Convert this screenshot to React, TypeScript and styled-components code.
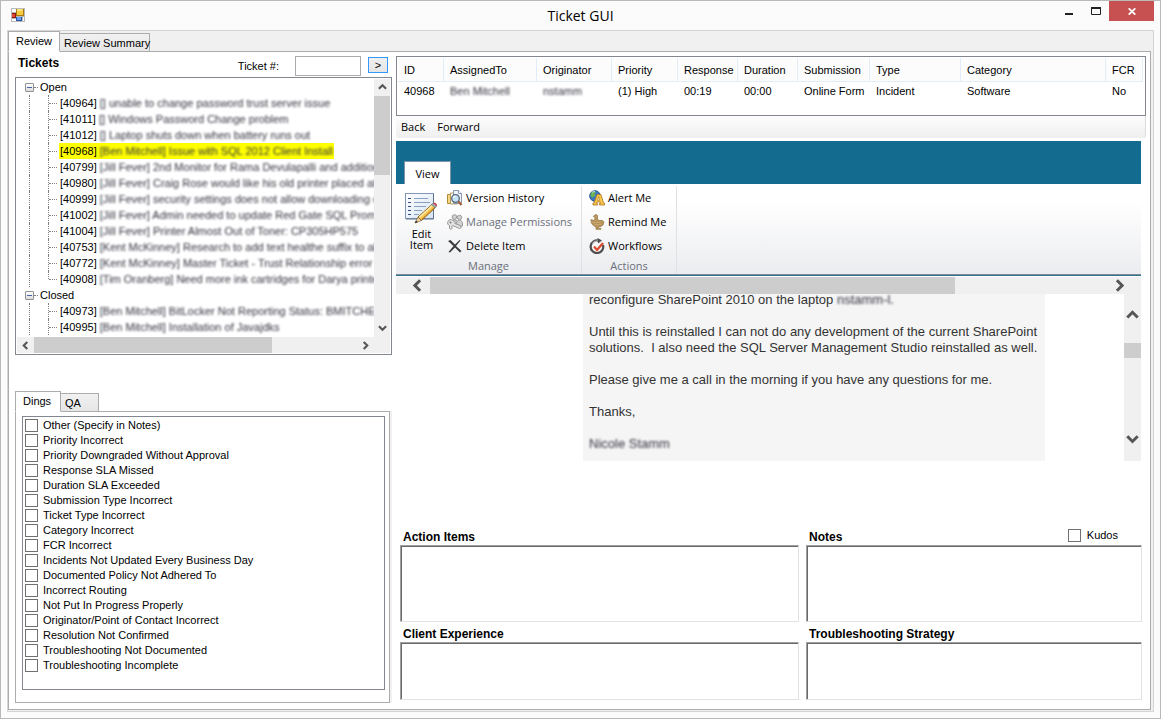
import React, { useState } from 'react';
import styled, { createGlobalStyle } from 'styled-components';

const GlobalStyle = createGlobalStyle`
  * { box-sizing: border-box; }
  body {
    margin: 0;
    background: #fbfbfb;
    color: #000;
    font: 11px/16px "Liberation Sans", Arial, sans-serif;
  }
  button, input, textarea { font: inherit; color: inherit; margin: 0; padding: 0; border-radius: 0; }
  ul { list-style: none; margin: 0; padding: 0; }
`;

/* ---------- window frame ---------- */

const Window = styled.div`
  display: flex;
  flex-direction: column;
  min-height: 100vh;
  min-width: 1000px;
  padding: 0 6px 6px 6px;
  border: 1px solid #b9b9b9;
`;

const TitleBar = styled.header`
  display: grid;
  grid-template-columns: 1fr auto 1fr;
  height: 29px;
`;

const AppIconBox = styled.div`
  padding: 7px 0 0 4px;
  line-height: 0;
`;

const Title = styled.h1`
  margin: 0;
  font: 14px/29px "Open Sans", "Noto Sans", sans-serif;
`;

const WindowButtons = styled.div`
  display: flex;
  justify-content: flex-end;
  align-items: flex-start;
`;

const WindowButton = styled.button<{ $close?: boolean }>`
  display: flex;
  align-items: center;
  justify-content: center;
  width: ${p => (p.$close ? 45 : 27)}px;
  height: 20px;
  border: 0;
  background: ${p => (p.$close ? '#c75050' : 'transparent')};
`;

const Client = styled.main`
  display: flex;
  flex-direction: column;
  flex: 1;
  padding: 0 2px 1px 0;
  border: 1px solid #d4d4d4;
  background: #f0f0f0;
`;

/* ---------- tabs ---------- */

const TabStrip = styled.div`
  display: flex;
  align-items: flex-end;
  height: 21px;
  margin-bottom: -1px;
  z-index: 1;
`;

const Tab = styled.button<{ $active?: boolean; $width: number }>`
  width: ${p => p.$width}px;
  height: ${p => (p.$active ? 21 : 19)}px;
  padding-left: ${p => (p.$active ? 7 : 4)}px;
  padding-bottom: ${p => (p.$active ? 1 : 0)}px;
  border: 1px solid #acacac;
  border-left-width: ${p => (p.$active ? 1 : 0)}px;
  border-bottom-color: ${p => (p.$active ? '#fff' : '#acacac')};
  background: ${p => (p.$active ? '#fff' : 'linear-gradient(#f1f1f1, #e6e6e6)')};
  text-align: left;
  white-space: nowrap;
`;

const Page = styled.div`
  display: flex;
  flex: 1;
  gap: 4px;
  padding: 4px 4px 6px 6px;
  border: 1px solid #acacac;
  background: #fff;
`;

const LeftColumn = styled.section`
  display: flex;
  flex-direction: column;
  width: 377px;
`;

const RightColumn = styled.section`
  display: flex;
  flex-direction: column;
  flex: 1;
  min-width: 0;
`;

/* ---------- ticket search ---------- */

const SearchRow = styled.form`
  display: flex;
  align-items: flex-start;
  height: 21px;
  padding: 0 4px 0 3px;
`;

const Heading = styled.h2`
  flex: 1;
  margin: 0;
  font-size: 12px;
  line-height: 14px;
`;

const SearchLabel = styled.label`
  margin-right: 16px;
  line-height: 20px;
`;

const SearchInput = styled.input`
  width: 66px;
  height: 20px;
  margin-right: 7px;
  border: 1px solid #ababab;
`;

const GoButton = styled.button`
  width: 20px;
  height: 16px;
  margin-top: 1px;
  border: 1px solid #3399ff;
  background: linear-gradient(#f0f0f0, #e5e5e5);
  line-height: 14px;
`;

/* ---------- tree ---------- */

const TreeFrame = styled.div`
  display: grid;
  grid-template-columns: minmax(0, 1fr) 16px;
  grid-template-rows: 258px 16px;
  padding: 1px;
  border: 1px solid #828790;
`;

const Tree = styled.ul`
  overflow: hidden;
  white-space: nowrap;
`;

const GroupRow = styled.div`
  display: flex;
  align-items: center;
  height: 16px;
  padding-left: 8px;
`;

const Expander = styled.button`
  display: flex;
  align-items: center;
  justify-content: center;
  width: 9px;
  height: 9px;
  border: 1px solid #919191;
  border-radius: 1px;
  background: linear-gradient(#fff, #dcdcdc);
  &::before { content: ''; width: 5px; height: 1px; background: #4b63a7; }
`;

const Twig = styled.span<{ $width: number }>`
  flex: 0 0 ${p => p.$width}px;
  margin-right: 2px;
  border-top: 1px dotted #808080;
`;

const LeafRow = styled.li`
  display: flex;
  align-items: center;
  height: 16px;
  padding-left: 12px;
`;

const Spine = styled.span<{ $width: number; $end?: boolean }>`
  align-self: flex-start;
  flex: 0 0 ${p => p.$width}px;
  height: ${p => (p.$end ? 8 : 16)}px;
  border-left: 1px dotted #808080;
`;

const LeafText = styled.span<{ $selected?: boolean }>`
  flex: none;
  padding: 0 1px;
  background: ${p => (p.$selected ? '#ffff00' : 'transparent')};
`;

const Redacted = styled.span`
  display: inline-block;
  color: #33333f;
  filter: blur(1px);
`;

/* ---------- scroll bars ---------- */

const ScrollBar = styled.div<{ $vertical?: boolean; $pad?: number; $wide?: boolean }>`
  display: flex;
  flex-direction: ${p => (p.$vertical ? 'column' : 'row')};
  grid-column: ${p => (p.$wide ? 'span 2' : 'auto')};
  padding: ${p => (p.$vertical ? `${p.$pad ?? 0}px 0` : `0 ${p.$pad ?? 0}px`)};
  background: #f0f0f0;
`;

const ScrollButton = styled.button`
  display: flex;
  align-items: center;
  justify-content: center;
  flex: 0 0 17px;
  border: 0;
  background: transparent;
`;

const Track = styled.div<{ $vertical?: boolean }>`
  display: flex;
  flex-direction: ${p => (p.$vertical ? 'column' : 'row')};
  flex: 1;
`;

const Spacer = styled.div<{ $grow: number }>`
  flex: ${p => p.$grow} 0 0;
`;

const Thumb = styled.div<{ $grow: number }>`
  flex: ${p => p.$grow} 0 0;
  background: #cdcdcd;
`;

/* ---------- dings ---------- */

const DingsTabs = styled(TabStrip)`
  margin-top: 36px;
`;

const DingsPanel = styled.div`
  display: flex;
  flex: 1;
  width: 375px;
  padding: 4px 4px 12px 6px;
  border: 1px solid #acacac;
  box-shadow: 2px 0 #f0f0f0;
`;

const CheckList = styled.ul`
  flex: 1;
  padding: 1px 2px;
  border: 1px solid #828790;
`;

const CheckLabel = styled.label<{ $gap?: number }>`
  display: flex;
  align-items: center;
  gap: ${p => p.$gap ?? 5}px;
  height: 15px;
  line-height: 13px;
`;

const CheckBox = styled.input.attrs({ type: 'checkbox' })`
  appearance: none;
  width: 13px;
  height: 13px;
  border: 1px solid #707070;
  background: #fff;
  &:checked { background: #707070; box-shadow: inset 0 0 0 2px #fff; }
`;

/* ---------- ticket grid ---------- */

const GridFrame = styled.div`
  height: 60px;
  padding: 1px 2px 0 1px;
  border: 1px solid #828790;
`;

const Grid = styled.table`
  width: 100%;
  table-layout: fixed;
  border-collapse: separate;
  border-spacing: 0;
  text-align: left;
  white-space: nowrap;
  th, td { padding: 0 0 0 6px; font-weight: normal; }
  th {
    height: 24px;
    border-right: 1px solid #e3edf8;
    border-bottom: 1px solid #e3edf8;
    background: #fcfcfc;
  }
  td { height: 18px; }
`;

const ToolBar = styled.nav`
  display: flex;
  gap: 12px;
  height: 22px;
  margin-bottom: 3px;
  padding-left: 5px;
  border-right: 1px solid #dcdcdc;
  border-radius: 0 0 3px 3px;
  background: linear-gradient(#fdfdfd, #efefef);
`;

const ToolButton = styled.button`
  border: 0;
  background: none;
  font: 11px/22px "Open Sans", "Noto Sans", sans-serif;
`;

/* ---------- embedded browser ---------- */

const Browser = styled.div`
  margin-right: 5px;
`;

const Banner = styled.div`
  display: flex;
  align-items: flex-end;
  height: 43px;
  padding-left: 8px;
  background: #136c8f;
`;

const RibbonTab = styled.button`
  width: 47px;
  height: 23px;
  border: 1px solid #7e93a5;
  border-bottom: 0;
  background: #fff;
  font: 11px/24px "Open Sans", "Noto Sans", sans-serif;
`;

const Ribbon = styled.div`
  display: flex;
  padding-top: 2px;
  border-bottom: 1px solid #838b98;
  box-shadow: 0 1px #2d7191;
  background: linear-gradient(#fff 20%, #ebecef);
  font: 11px/16px "Open Sans", "Noto Sans", sans-serif;
`;

const RibbonGroup = styled.div<{ $width: number }>`
  width: ${p => p.$width}px;
  border-right: 1px solid #dfe1e5;
`;

const RibbonBody = styled.div`
  display: flex;
  gap: 7px;
  padding-left: 7px;
`;

const RibbonCaption = styled.div`
  height: 16px;
  color: #6b6f7a;
  text-align: center;
`;

const LargeCommand = styled.button`
  display: flex;
  flex-direction: column;
  align-items: center;
  width: 37px;
  padding-top: 6px;
  border: 0;
  background: none;
  line-height: 11px;
  svg { margin: 0 1px 4px 0; }
`;

const Command = styled.button`
  display: flex;
  align-items: center;
  gap: 3px;
  height: 24px;
  border: 0;
  background: none;
  white-space: nowrap;
  &:disabled { color: #6b6f7a; }
`;

const Viewport = styled.div`
  display: grid;
  grid-template-columns: minmax(0, 1fr) 17px;
  grid-template-rows: 17px 167px;
  margin-top: 2px;
`;

const MessageArea = styled.div`
  overflow: hidden;
  padding-left: 187px;
`;

const Message = styled.article`
  display: flow-root;
  width: 462px;
  height: 167px;
  padding: 0 0 0 6px;
  background: #f5f5f5;
  color: #333;
  font-size: 13px;
  white-space: pre;
  p { margin: 0 0 16px; }
  p:first-child { margin-top: -2px; }
`;

/* ---------- review notes ---------- */

const Notes = styled.div`
  display: grid;
  grid-template-columns: 399fr 336fr;
  grid-template-rows: 17px 77px 20px 58px;
  grid-auto-flow: column;
  column-gap: 7px;
  margin: auto 4px 3px;
`;

const NoteLabel = styled.label`
  align-self: end;
  padding: 0 0 0 3px;
  font-size: 12px;
  font-weight: bold;
`;

const LabelRow = styled.div`
  display: flex;
  justify-content: space-between;
  padding-right: 24px;
`;

const NoteBox = styled.textarea`
  display: block;
  width: 100%;
  height: 100%;
  border: 1px solid;
  border-color: #a0a0a0 #e3e3e3 #e3e3e3 #a0a0a0;
  box-shadow: inset 1px 1px #696969;
  background: #fff;
  resize: none;
`;

/* ---------- drawings ---------- */

const AppIcon = () => (
  <svg width="14" height="14" viewBox="0 0 14 14" aria-hidden="true">
    <rect width="14" height="14" fill="#b9b9b9" />
    <path d="M1 1h4v3H1zM1 11h4v2H1zM12 9h1v4h-1z" fill="#fff" />
    <rect x="5" y="1" width="8" height="7" fill="#a87c10" />
    <rect x="6" y="1" width="6" height="6" fill="#f7cb3b" />
    <rect x="6" y="1" width="5" height="2" fill="#fbe38a" />
    <rect x="1" y="5" width="4" height="5" fill="#8d1410" />
    <rect x="1" y="6" width="3" height="3" fill="#df4a34" />
    <rect x="5" y="9" width="6" height="4" fill="#2a58a8" />
    <rect x="6" y="9" width="4" height="3" fill="#6d9ff0" />
  </svg>
);

const arrows = {
  up: 'M1 6.5L5 2.5L9 6.5',
  down: 'M1 2.5L5 6.5L9 2.5',
  left: 'M7 1L3 5L7 9',
  right: 'M3 1L7 5L3 9',
};

const Arrow = ({ dir, size = 9 }: { dir: keyof typeof arrows; size?: number }) => (
  <svg width={size} height={size} viewBox="0 0 10 10" fill="none" stroke="#555" strokeWidth="2.3" aria-hidden="true">
    <path d={arrows[dir]} />
  </svg>
);

const EditIcon = () => (
  <svg width="34" height="32" viewBox="0 0 34 32" aria-hidden="true">
    <defs>
      <linearGradient id="sheet" x2="1" y2="1">
        <stop offset="0" stopColor="#fff" />
        <stop offset="1" stopColor="#d5e3f3" />
      </linearGradient>
    </defs>
    <rect x="1.5" y="1.5" width="28" height="25" fill="url(#sheet)" stroke="#8297b3" />
    <path d="M29.5 2v25H2" fill="none" stroke="#5e7391" />
    <path d="M4 6.5h4M4 10.5h4M4 14.5h4M4 18.5h4M4 22.5h4" stroke="#324d7a" strokeDasharray="3 1" />
    <path d="M10 6.5h14M10 10.5h16M10 14.5h12M10 18.5h8M10 22.5h5" stroke="#8ba0bd" />
    <path d="M14 25L28 12.500L31.500 15.500L17.500 28.500z" fill="#f7c652" stroke="#8b6421" />
    <path d="M15.500 25.300L28.500 13.500" stroke="#fff0ae" strokeWidth="1.300" />
    <path d="M17.500 27.500L30.500 15.500" stroke="#c98a23" strokeWidth="1" />
    <path d="M11 31l3-6 3.500 3.500z" fill="#efd3a2" stroke="#7d5f35" strokeWidth=".7" />
    <path d="M11 31l1-2.500 1.700 1.700z" fill="#222" />
    <path d="M27.500 12.500l1.500-1.300 3.500 3-1.500 1.500z" fill="#a9b4b9" stroke="#5c6b70" strokeWidth=".6" />
    <path d="M29 11.200c1.800-1.600 5 1 3.700 3z" fill="#c9434a" />
  </svg>
);

const HistoryIcon = () => (
  <svg width="16" height="16" viewBox="0 0 16 16" aria-hidden="true">
    <path d="M.5 4.500h6v9h-6z" fill="#f8d782" stroke="#b28b34" />
    <path d="M3.500 3h7v11h-7z" fill="#fff" stroke="#b29a5a" />
    <path d="M6.500 .5h5l3 3v10h-8z" fill="#eef4fc" stroke="#8d9bb4" />
    <path d="M11.500 .5v3h3" fill="#fff" stroke="#8d9bb4" />
    <circle cx="8.500" cy="8.500" r="3.800" fill="#c4e3f8" stroke="#59636f" strokeWidth="1.300" />
    <path d="M6.500 8a2 2 0 0 1 2-2" fill="none" stroke="#fff" strokeWidth="1.200" />
    <path d="M11.500 11.500l3 3.500" stroke="#a85f3a" strokeWidth="2.300" />
  </svg>
);

const PermissionsIcon = () => (
  <svg width="16" height="16" viewBox="0 0 16 16" fill="#d3d3d3" stroke="#989898" aria-hidden="true">
    <circle cx="7.500" cy="3" r="2.300" />
    <path d="M4 9c0-4 7-4 7 0z" />
    <circle cx="12.500" cy="3.500" r="2.200" />
    <path d="M9.500 10c0-5 6-5 6 0v2h-6z" />
    <path d="M6 6.500a3 3 0 0 0-5 1c-1 2 0 3.500 1.500 4v3l1.500 1 1.500-1.500-1-1 1-1.500 7 3 2-1-1.500-2-5-2c.5-1-.5-2.500-2-3z" fill="#e2e2e2" />
    <circle cx="3.500" cy="8.500" r=".7" fill="#777" />
  </svg>
);

const DeleteIcon = () => (
  <svg width="16" height="16" viewBox="0 0 16 16" fill="#3b3b3b" aria-hidden="true">
    <path d="M1 3l2.500-1 4.500 4.500L12.500 2l1 .5-4.500 5.500L14.500 13l-1.500 1.500-5-5L3 14.500l-1.500-.5L6.500 8z" />
  </svg>
);

const AlertIcon = () => (
  <svg width="16" height="16" viewBox="0 0 16 16" aria-hidden="true">
    <circle cx="6" cy="6" r="5.300" fill="#3d78bd" stroke="#28558d" />
    <path d="M2 3c2-2 4-2 5-1L5.500 4 6 6 3 7.500 1.500 6zM7 8l3-3 1 2-2 3z" fill="#6fb553" />
    <path d="M3 2.500c1-1 2-1 3-1" stroke="#d7eaff" fill="none" />
    <path d="M8 4.500h4l2.500 8.500h1v2h-5v-1.500h1l-.4-1.500H8l-.5 1.500h1V15H4v-2h1z" fill="#f9c847" stroke="#a9742a" strokeWidth=".8" />
    <path d="M9.700 6.500l1 3.800H8.500z" fill="#fff6d0" stroke="#a9742a" strokeWidth=".6" />
  </svg>
);

const RemindIcon = () => (
  <svg width="16" height="16" viewBox="0 0 16 16" aria-hidden="true">
    <path d="M5.500 1.200l1.500-.7 1.500 1v3.500l1.500 1.500h3.500l1.500 1.500-1 3-2 1.500-3 .7.300 1.300H12v.8H7v-2L4 11 2 8.500l.5-1L1.500 6l1.500-.3 2 1 .8-1.500V3l-1.500-.5z" fill="#b9955c" stroke="#94733f" strokeWidth=".7" />
    <path d="M3.500 8.500h8M5 10.500h7M6.500 2.500h1.500" stroke="#cfae78" strokeWidth=".7" />
  </svg>
);

const WorkflowIcon = () => (
  <svg width="16" height="16" viewBox="0 0 16 16" fill="none" aria-hidden="true">
    <circle cx="8" cy="9" r="5.500" fill="#f7f7f7" />
    <path d="M10 2.800A6.300 6.300 0 1 0 14 7" stroke="#4e4e4e" strokeWidth="2.200" />
    <path d="M3.500 5.500A6 6 0 0 1 9 2.800" stroke="#b9b9b9" strokeWidth="1.200" />
    <path d="M8.500 0l4.500 2.500L9 5.500z" fill="#4e4e4e" />
    <path d="M5 8.500L8 12l6-7" stroke="#dd4b2f" strokeWidth="2.200" />
  </svg>
);

/* ---------- data ---------- */

type Ticket = [id: string, summary: string];

const openTickets: Ticket[] = [
  ['40964', '[] unable to change password trust server issue'],
  ['41011', '[] Windows Password Change problem'],
  ['41012', '[] Laptop shuts down when battery runs out'],
  ['40968', '[Ben Mitchell] Issue with SQL 2012 Client Install'],
  ['40799', '[Jill Fever] 2nd Monitor for Rama Devulapalli and additional'],
  ['40980', '[Jill Fever] Craig Rose would like his old printer placed at m'],
  ['40999', '[Jill Fever] security settings does not allow downloading of f'],
  ['41002', '[Jill Fever] Admin needed to update Red Gate SQL Prompt'],
  ['41004', '[Jill Fever] Printer Almost Out of Toner: CP305HP575'],
  ['40753', '[Kent McKinney] Research to add text healthe suffix to all u'],
  ['40772', '[Kent McKinney] Master Ticket - Trust Relationship error'],
  ['40908', '[Tim Oranberg] Need more ink cartridges for Darya printer'],
];

const closedTickets: Ticket[] = [
  ['40973', '[Ben Mitchell] BitLocker Not Reporting Status: BMITCHEL'],
  ['40995', '[Ben Mitchell] Installation of Javajdks'],
];

const dings = [
  'Other (Specify in Notes)',
  'Priority Incorrect',
  'Priority Downgraded Without Approval',
  'Response SLA Missed',
  'Duration SLA Exceeded',
  'Submission Type Incorrect',
  'Ticket Type Incorrect',
  'Category Incorrect',
  'FCR Incorrect',
  'Incidents Not Updated Every Business Day',
  'Documented Policy Not Adhered To',
  'Incorrect Routing',
  'Not Put In Progress Properly',
  'Originator/Point of Contact Incorrect',
  'Resolution Not Confirmed',
  'Troubleshooting Not Documented',
  'Troubleshooting Incomplete',
];

const columns: { name: string; width?: number; value: React.ReactNode }[] = [
  { name: 'ID', width: 46, value: '40968' },
  { name: 'AssignedTo', width: 93, value: <Redacted>Ben Mitchell</Redacted> },
  { name: 'Originator', width: 75, value: <Redacted>nstamm</Redacted> },
  { name: 'Priority', width: 66, value: '(1) High' },
  { name: 'Response', width: 60, value: '00:19' },
  { name: 'Duration', width: 60, value: '00:00' },
  { name: 'Submission', width: 72, value: 'Online Form' },
  { name: 'Type', width: 91, value: 'Incident' },
  { name: 'Category', value: 'Software' },
  { name: 'FCR', width: 37, value: 'No' },
];

/* ---------- parts ---------- */

interface BranchProps {
  name: string;
  tickets: Ticket[];
  last?: boolean;
  selected: string;
  onSelect: (id: string) => void;
}

const Branch = ({ name, tickets, last, selected, onSelect }: BranchProps) => (
  <li>
    <GroupRow>
      <Expander aria-label={`Collapse ${name}`} />
      <Twig $width={4} />
      {name}
    </GroupRow>
    <ul>
      {tickets.map(([id, summary], i) => (
        <LeafRow key={id} onClick={() => onSelect(id)}>
          <Spine $width={19} />
          <Spine $width={1} $end={!last && i === tickets.length - 1} />
          <Twig $width={8} />
          <LeafText $selected={id === selected}>
            [{id}] <Redacted>{summary}</Redacted>
          </LeafText>
        </LeafRow>
      ))}
    </ul>
  </li>
);

interface ScrollerProps {
  vertical?: boolean;
  wide?: boolean;
  pad?: number;
  arrowSize?: number;
  split: [number, number, number];
}

const Scroller = ({ vertical, wide, pad, arrowSize, split }: ScrollerProps) => (
  <ScrollBar $vertical={vertical} $pad={pad} $wide={wide}>
    <ScrollButton aria-label={vertical ? 'Scroll up' : 'Scroll left'}>
      <Arrow dir={vertical ? 'up' : 'left'} size={arrowSize} />
    </ScrollButton>
    <Track $vertical={vertical}>
      <Spacer $grow={split[0]} />
      <Thumb $grow={split[1]} />
      <Spacer $grow={split[2]} />
    </Track>
    <ScrollButton aria-label={vertical ? 'Scroll down' : 'Scroll right'}>
      <Arrow dir={vertical ? 'down' : 'right'} size={arrowSize} />
    </ScrollButton>
  </ScrollBar>
);

export default function App() {
  const [selected, setSelected] = useState('40968');

  return (
    <>
      <GlobalStyle />
      <Window>
        <TitleBar>
          <AppIconBox><AppIcon /></AppIconBox>
          <Title>Ticket GUI</Title>
          <WindowButtons>
            <WindowButton aria-label="Minimize">
              <svg width="10" height="10"><rect x="1" y="7" width="8" height="2" fill="#222" /></svg>
            </WindowButton>
            <WindowButton aria-label="Maximize">
              <svg width="10" height="8"><path d="M.5 1v6.500h9V1" fill="none" stroke="#222" /><rect width="10" height="2" fill="#222" /></svg>
            </WindowButton>
            <WindowButton $close aria-label="Close">
              <svg width="8" height="7" viewBox="0 0 8 7"><path d="M.7 .3l6.600 6.400M7.300 .3L.7 6.700" stroke="#fff" strokeWidth="1.700" /></svg>
            </WindowButton>
          </WindowButtons>
        </TitleBar>

        <Client>
          <TabStrip role="tablist">
            <Tab role="tab" aria-selected $active $width={52}>Review</Tab>
            <Tab role="tab" $width={90}>Review Summary</Tab>
          </TabStrip>
          <Page>
            <LeftColumn>
              <SearchRow onSubmit={e => e.preventDefault()}>
                <Heading>Tickets</Heading>
                <SearchLabel htmlFor="ticket">Ticket #:</SearchLabel>
                <SearchInput id="ticket" />
                <GoButton>&gt;</GoButton>
              </SearchRow>

              <TreeFrame>
                <Tree>
                  <Branch name="Open" tickets={openTickets} selected={selected} onSelect={setSelected} />
                  <Branch name="Closed" tickets={closedTickets} last selected={selected} onSelect={setSelected} />
                </Tree>
                <Scroller vertical split={[0, 79, 145]} />
                <Scroller split={[0, 237, 85]} />
                <ScrollBar />
              </TreeFrame>

              <DingsTabs role="tablist">
                <Tab role="tab" aria-selected $active $width={46}>Dings</Tab>
                <Tab role="tab" $width={38}>QA</Tab>
              </DingsTabs>
              <DingsPanel>
                <CheckList>
                  {dings.map(ding => (
                    <li key={ding}>
                      <CheckLabel><CheckBox />{ding}</CheckLabel>
                    </li>
                  ))}
                </CheckList>
              </DingsPanel>
            </LeftColumn>

            <RightColumn>
              <GridFrame>
                <Grid>
                  <colgroup>
                    {columns.map(c => <col key={c.name} width={c.width} />)}
                  </colgroup>
                  <thead>
                    <tr>{columns.map(c => <th key={c.name}>{c.name}</th>)}</tr>
                  </thead>
                  <tbody>
                    <tr>{columns.map(c => <td key={c.name}>{c.value}</td>)}</tr>
                  </tbody>
                </Grid>
              </GridFrame>
              <ToolBar>
                <ToolButton>Back</ToolButton>
                <ToolButton>Forward</ToolButton>
              </ToolBar>

              <Browser>
                <Banner><RibbonTab>View</RibbonTab></Banner>
                <Ribbon>
                  <RibbonGroup $width={186}>
                    <RibbonBody>
                      <LargeCommand><EditIcon /><span>Edit<br />Item</span></LargeCommand>
                      <div>
                        <Command><HistoryIcon />Version History</Command>
                        <Command disabled><PermissionsIcon />Manage Permissions</Command>
                        <Command><DeleteIcon />Delete Item</Command>
                      </div>
                    </RibbonBody>
                    <RibbonCaption>Manage</RibbonCaption>
                  </RibbonGroup>
                  <RibbonGroup $width={95}>
                    <RibbonBody>
                      <div>
                        <Command><AlertIcon />Alert Me</Command>
                        <Command><RemindIcon />Remind Me</Command>
                        <Command><WorkflowIcon />Workflows</Command>
                      </div>
                    </RibbonBody>
                    <RibbonCaption>Actions</RibbonCaption>
                  </RibbonGroup>
                </Ribbon>
                <Viewport>
                  <Scroller wide pad={13} arrowSize={13} split={[4, 525, 156]} />
                  <MessageArea>
                    <Message>
                      <p>reconfigure SharePoint 2010 on the laptop <Redacted>nstamm-l.</Redacted></p>
                      <p>{'Until this is reinstalled I can not do any development of the current SharePoint\nsolutions.  I also need the SQL Server Management Studio reinstalled as well.'}</p>
                      <p>Please give me a call in the morning if you have any questions for me.</p>
                      <p>Thanks,</p>
                      <p><Redacted>Nicole Stamm</Redacted></p>
                    </Message>
                  </MessageArea>
                  <Scroller vertical pad={13} arrowSize={13} split={[19, 15, 73]} />
                </Viewport>
              </Browser>

              <Notes>
                <NoteLabel htmlFor="actions">Action Items</NoteLabel>
                <NoteBox id="actions" />
                <NoteLabel htmlFor="client">Client Experience</NoteLabel>
                <NoteBox id="client" />
                <LabelRow>
                  <NoteLabel htmlFor="notes">Notes</NoteLabel>
                  <CheckLabel $gap={6}><CheckBox />Kudos</CheckLabel>
                </LabelRow>
                <NoteBox id="notes" />
                <NoteLabel htmlFor="strategy">Troubleshooting Strategy</NoteLabel>
                <NoteBox id="strategy" />
              </Notes>
            </RightColumn>
          </Page>
        </Client>
      </Window>
    </>
  );
}
